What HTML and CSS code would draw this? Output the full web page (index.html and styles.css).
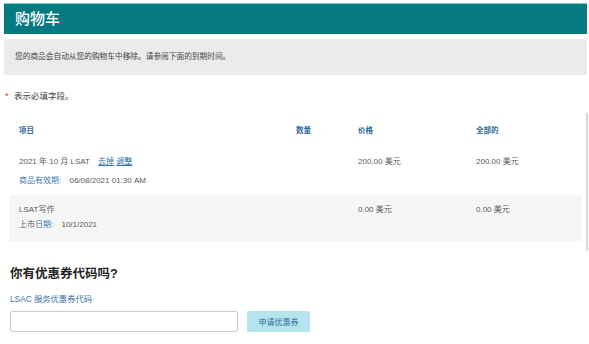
FILE: index.html
```html
<!DOCTYPE html>
<html lang="zh">
<head>
  <meta charset="UTF-8">
  <meta name="viewport" content="width=device-width, initial-scale=1.0">
  <title>购物车</title>
  <link rel="stylesheet" href="styles.css">
</head>
<body>
  <header class="page-title">购物车</header>

  <div class="notice">您的商品会自动从您的购物车中移除。请参阅下面的到期时间。</div>

  <p class="required"><span class="star">*</span> 表示必填字段。</p>

  <section class="cart">
    <div class="cart-row cart-head">
      <div>项目</div>
      <div>数量</div>
      <div>价格</div>
      <div>全部的</div>
    </div>
    <div class="cart-row">
      <div>
        <div>2021 年 10 月 LSAT <a href="#" class="link first">去掉</a> <a href="#" class="link">调整</a></div>
        <div class="sub"><span class="blue">商品有效期:</span> 06/08/2021 01:30 AM</div>
      </div>
      <div></div>
      <div>200.00 美元</div>
      <div>200.00 美元</div>
    </div>
    <div class="cart-row alt">
      <div>
        <div>LSAT写作</div>
        <div class="sub">上市<span class="blue">日期:</span> 10/1/2021</div>
      </div>
      <div></div>
      <div>0.00 美元</div>
      <div>0.00 美元</div>
    </div>
  </section>

  <section class="coupon">
    <h2>你有优惠券代码吗?</h2>
    <label for="code">LSAC 服务优惠券代码</label>
    <div class="coupon-form">
      <input type="text" id="code">
      <button type="button">申请优惠券</button>
    </div>
  </section>
</body>
</html>
```

FILE: styles.css
```css
* {
  margin: 0;
  padding: 0;
  box-sizing: border-box;
}

body {
  font-family: "Liberation Sans", "Noto Sans CJK SC", sans-serif;
  font-size: 8px;
  color: #5a5a5a;
  background: #fff;
  padding: 3px 1px 0 4px;
}

.page-title {
  height: 31px;
  background: #057a81;
  border-top: 1px solid #7cc9cc;
  color: #fff;
  font-size: 15px;
  font-weight: 500;
  line-height: 29px;
  padding-left: 11px;
  margin-right: 1px;
}

.notice {
  margin-top: 5px;
  margin-right: 1px;
  height: 36px;
  background: #ebebeb;
  font-size: 7.7px;
  line-height: 35px;
  padding-left: 11px;
  color: #444;
}

.required {
  margin-top: 15px;
  font-size: 8.5px;
  line-height: 12px;
  color: #444;
}

.star {
  color: #d0312d;
  font-size: 9px;
  margin-left: 1px;
  margin-right: 3px;
}

.cart {
  margin-top: 11px;
  margin-left: 5px;
  border-right: 2px solid #d8d8d8;
  padding-bottom: 10px;
  padding-right: 4px;
}

.cart-row {
  display: grid;
  grid-template-columns: 277px 62px 118px 1fr;
  padding-left: 10px;
  height: 48px;
  padding-top: 9px;
  line-height: 12px;
}

.cart-head {
  height: 34px;
  padding-top: 12px;
  color: #2c6aa0;
  font-weight: bold;
  font-size: 7.5px;
}

.cart-row .sub {
  margin-top: 7px;
}

.cart-row.alt {
  background: #f6f6f6;
  height: 46px;
  padding-top: 9px;
}

.cart-row.alt .sub {
  margin-top: 3px;
}

.link {
  color: #2d6ea8;
  text-decoration: underline;
}

.link.first {
  margin-left: 6px;
}

.blue {
  color: #3a7ab5;
  margin-right: 6px;
}

.coupon {
  padding-left: 6px;
  margin-top: 15px;
}

.coupon h2 {
  font-size: 12.5px;
  font-weight: bold;
  color: #222;
  line-height: 16px;
}

.coupon label {
  display: block;
  margin-top: 11px;
  color: #3a72a8;
  font-size: 8.3px;
  line-height: 12px;
}

.coupon-form {
  display: flex;
  gap: 9px;
  margin-top: 6px;
}

.coupon-form input {
  width: 228px;
  height: 21px;
  border: 1px solid #ccc;
  border-radius: 2px;
}

.coupon-form button {
  width: 63px;
  height: 21px;
  border: none;
  border-radius: 2px;
  background: #b6e4ec;
  color: #2d6ea8;
  font-family: inherit;
  font-size: 8px;
}
```
